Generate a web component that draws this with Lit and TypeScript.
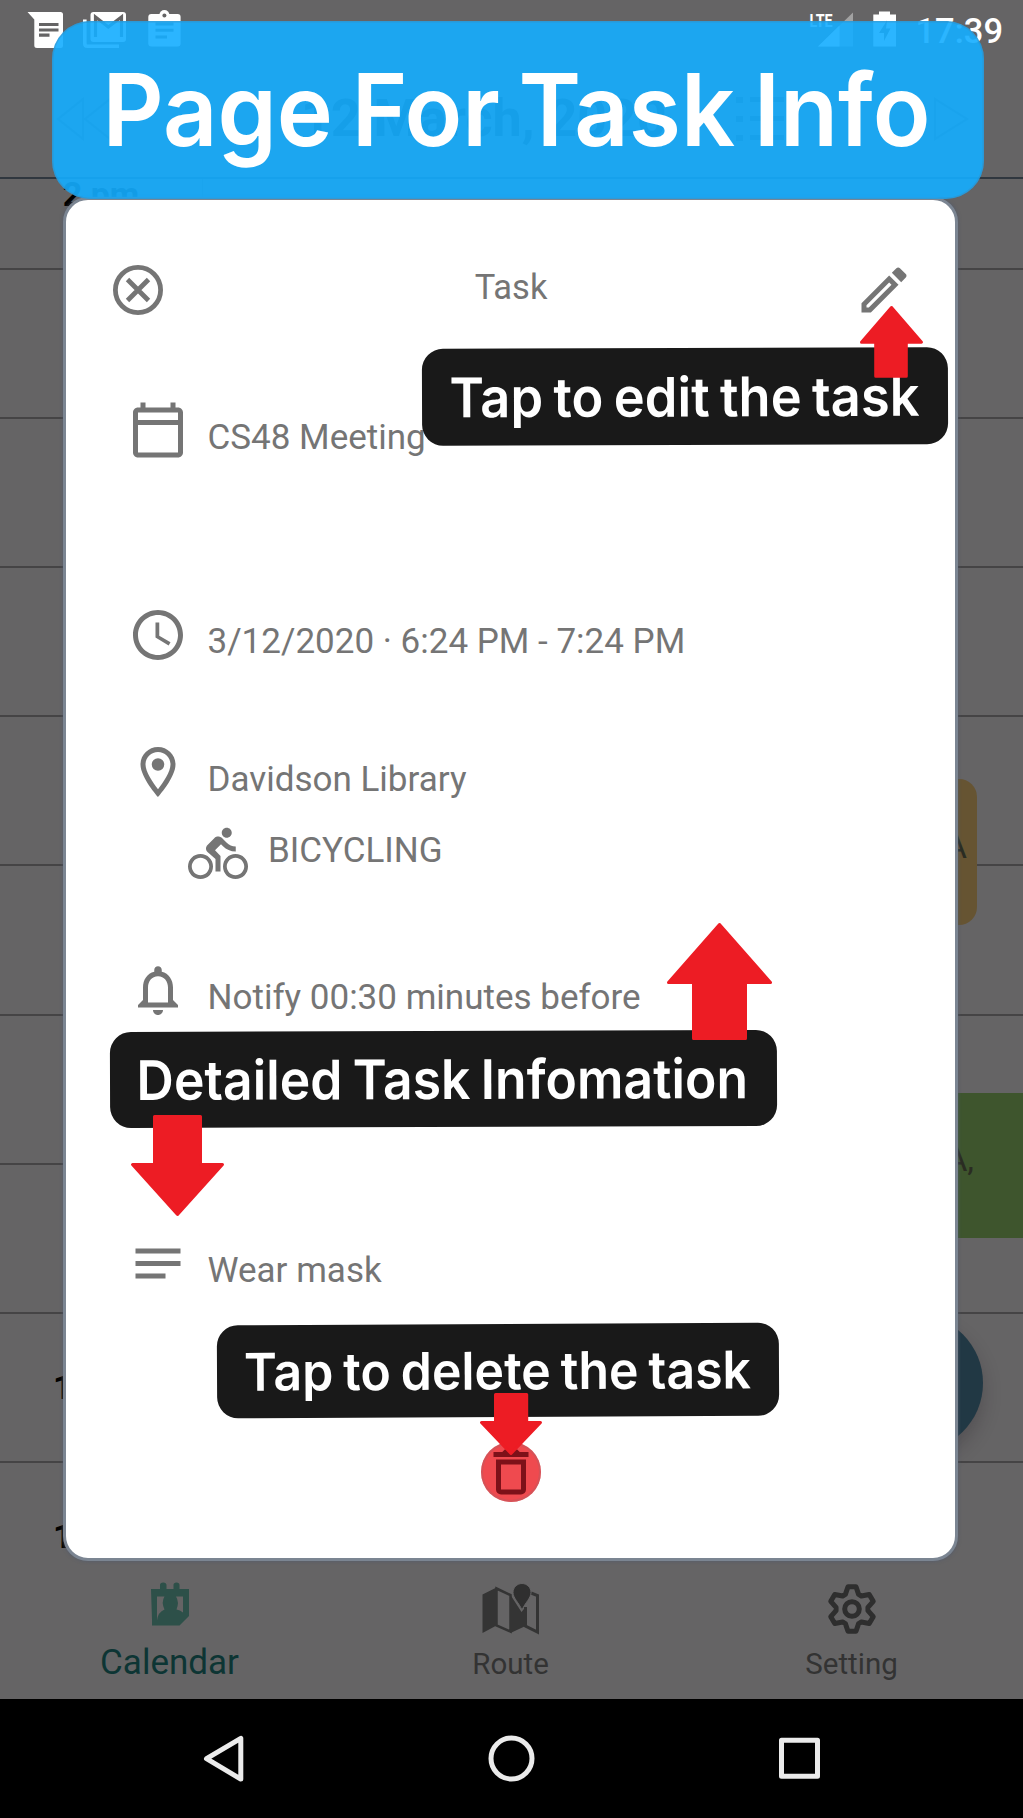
import { LitElement, html, svg, css } from "lit";
import { customElement, property } from "lit/decorators.js";

const ICONS: Record<string, string> = {
  edit: "M14.06,9L15,9.94L5.92,19H5V18.08L14.06,9M17.66,3C17.41,3 17.15,3.1 16.96,3.29L15.13,5.12L18.88,8.87L20.71,7.04C21.1,6.65 21.1,6 20.71,5.63L18.37,3.29C18.17,3.09 17.92,3 17.66,3M14.06,6.19L3,17.25V21H6.75L17.81,9.94L14.06,6.19Z",
  calendar:
    "M20 3h-1V1h-2v2H7V1H5v2H4c-1.1 0-2 .9-2 2v16c0 1.1.9 2 2 2h16c1.1 0 2-.9 2-2V5c0-1.1-.9-2-2-2zm0 2v3H4V5h16zM4 21V10h16v11H4z",
  clock:
    "M11.99 2C6.47 2 2 6.48 2 12s4.47 10 9.99 10C17.52 22 22 17.52 22 12S17.52 2 11.99 2zM12 20c-4.42 0-8-3.58-8-8s3.58-8 8-8 8 3.58 8 8-3.58 8-8 8zm.5-13H11v6l5.25 3.15.75-1.23-4.5-2.67z",
  place:
    "M12 2C8.13 2 5 5.13 5 9c0 5.25 7 13 7 13s7-7.75 7-13c0-3.87-3.13-7-7-7zM7 9c0-2.76 2.24-5 5-5s5 2.24 5 5c0 2.88-2.88 7.19-5 9.88C9.92 16.21 7 11.85 7 9zM12 6.5a2.5 2.5 0 1 0 0 5a2.5 2.5 0 1 0 0-5z",
  bike: "M15.5 5.5c1.1 0 2-.9 2-2s-.9-2-2-2-2 .9-2 2 .9 2 2 2zM5 12c-2.8 0-5 2.2-5 5s2.2 5 5 5 5-2.2 5-5-2.2-5-5-5zm0 8.5c-1.9 0-3.5-1.6-3.5-3.5s1.6-3.5 3.5-3.5 3.5 1.6 3.5 3.5-1.6 3.5-3.5 3.5zm5.8-10l2.4-2.4.8.8c1.3 1.3 3 2.1 5.1 2.1V9c-1.5 0-2.7-.6-3.6-1.5l-1.9-1.9c-.5-.4-1-.6-1.6-.6s-1.1.2-1.4.6L7.8 8.4c-.4.4-.6.9-.6 1.4 0 .6.2 1.1.6 1.4L11 14v5h2v-6.2l-2.2-2.3zM19 12c-2.8 0-5 2.2-5 5s2.2 5 5 5 5-2.2 5-5-2.2-5-5-5zm0 8.5c-1.9 0-3.5-1.6-3.5-3.5s1.6-3.5 3.5-3.5 3.5 1.6 3.5 3.5-1.6 3.5-3.5 3.5z",
  bell: "M12 22c1.1 0 2-.9 2-2h-4c0 1.1.9 2 2 2zm6-6v-5c0-3.07-1.63-5.64-4.5-6.32V4c0-.83-.67-1.5-1.5-1.5s-1.5.67-1.5 1.5v.68C7.64 5.36 6 7.92 6 11v5l-2 2v1h16v-1l-2-2zm-2 1H8v-6c0-2.48 1.51-4.5 4-4.5s4 2.02 4 4.5v6z",
  notes: "M3 5h18v2H3zM3 10h18v2H3zM3 15h12v2H3z",
  trash:
    "M6,19A2,2 0 0,0 8,21H16A2,2 0 0,0 18,19V7H6V19M8,9H16V19H8V9M15.5,4L14.5,3H9.5L8.5,4H5V6H19V4H15.5Z",
};

const glyph = (name: string) =>
  html`<svg class="icon" viewBox="0 0 24 24"><path d=${ICONS[name]} fill="currentColor"></path></svg>`;

/** Outline of a six-toothed gear centred on the origin. */
const gearOutline = (): string => {
  const tooth = [
    [-6.6, -14.6],
    [-4, -22.2],
    [4, -22.2],
    [6.6, -14.6],
  ];
  const points: string[] = [];
  for (let k = 0; k < 6; k++) {
    const a = (k * Math.PI) / 3;
    for (const [x, y] of tooth) {
      points.push(
        `${(x * Math.cos(a) - y * Math.sin(a)).toFixed(2)},${(x * Math.sin(a) + y * Math.cos(a)).toFixed(2)}`,
      );
    }
  }
  return points.join(" ");
};

@customElement("status-bar")
class StatusBar extends LitElement {
  static styles = css`
    :host {
      display: flex;
      align-items: flex-start;
      height: 60px;
      padding: 0 20px 0 27px;
      box-sizing: border-box;
      color: #fff;
      font: 500 34.5px/40px Roboto, sans-serif;
    }
    svg {
      display: block;
      flex: none;
    }
    .mail {
      margin-left: 18px;
    }
    .clip {
      margin-left: 20px;
    }
    .signal {
      margin-left: auto;
    }
    .battery {
      margin-left: 19px;
    }
    .time {
      margin: 11px 0 0 18px;
    }
    .lte {
      font: 700 19px Roboto, sans-serif;
      fill: #fff;
    }
  `;
  render() {
    return html`
      <svg width="37" height="60" viewBox="27 0 37 60">
        <path d="M27.500 12H60.500Q63 12 63 14.500V45.500Q63 48 60.500 48H37Q34.300 48 34.300 45.500V19.500Z" fill="#fff"></path>
        <path d="M39 24.500H58.500M39 30H58.500M39 35.200H49.500" stroke="#656465" stroke-width="3.200"></path>
      </svg>
      <svg class="mail" width="45" height="60" viewBox="82 0 45 60">
        <path d="M84.800 19.500V43.500Q84.800 46.200 87.500 46.200H119" stroke="#fff" stroke-width="3.600" fill="none"></path>
        <rect x="90.500" y="12" width="35.500" height="30" rx="3" fill="#fff"></rect>
        <path d="M95.500 37V17L108.300 27L121.500 17V37" stroke="#656465" stroke-width="3.200" fill="none"></path>
      </svg>
      <svg class="clip" width="35" height="60" viewBox="147 0 35 60">
        <rect x="148.300" y="14" width="32.300" height="32.500" rx="3" fill="#fff"></rect>
        <circle cx="164.400" cy="15" r="5" fill="#fff"></circle>
        <circle cx="164.400" cy="15.500" r="2" fill="#656465"></circle>
        <path d="M155.500 24H173.500M155.500 30.200H173.500M155.500 37H167" stroke="#656465" stroke-width="3"></path>
      </svg>
      <svg class="signal" width="45" height="60" viewBox="809 0 45 60">
        <path d="M818 46.500L853 12.500V46.500Z" fill="#fff" fill-opacity=".4"></path>
        <path d="M818 46.500L839.500 25.600V46.500Z" fill="#fff"></path>
        <path d="M809 11H834V28H809Z" fill="#656465"></path>
        <text class="lte" x="809.500" y="26.500" textLength="23" lengthAdjust="spacingAndGlyphs">LTE</text>
      </svg>
      <svg class="battery" width="24" height="60" viewBox="873 0 24 60">
        <path d="M873.300 14.500H879V11.500H890V14.500H896V46.500H873.300Z" fill="#fff"></path>
        <path d="M887 20.500L879 33H884V41L890.500 28.500H886Z" fill="#656465"></path>
      </svg>
      <span class="time">17:39</span>
    `;
  }
}

@customElement("day-view")
class DayView extends LitElement {
  static styles = css`
    :host {
      display: flex;
      flex-direction: column;
      height: 1497px;
      overflow: hidden;
      position: relative;
      font-family: Roboto, sans-serif;
    }
    .head {
      display: flex;
      align-items: center;
      flex: none;
      height: 119px;
      box-sizing: border-box;
      border-bottom: 2px solid #30373f;
      padding: 0 50px 0 55px;
      color: #1e1e1e;
    }
    .date {
      font-size: 52px;
      font-weight: 700;
      white-space: nowrap;
      margin-left: 188px;
    }
    .list {
      margin-left: 69px;
    }
    .next {
      margin-left: auto;
    }
    .hours {
      flex: none;
      margin-top: -58px;
      clip-path: inset(58px 0 0 0);
    }
    .hour {
      display: grid;
      grid-template-columns: 203px 1fr;
      height: 149.1px;
      box-sizing: border-box;
      border-bottom: 2px solid #454445;
    }
    .label {
      border-right: 1px solid #565556;
      font-size: 34px;
      font-weight: 700;
      line-height: 40px;
      padding-top: 53px;
      text-align: center;
      color: #000;
    }
    .event {
      position: absolute;
      box-sizing: border-box;
      font-size: 34px;
      line-height: 40px;
      color: #2a2c22;
      text-align: right;
    }
    .orange {
      left: 220px;
      width: 757px;
      top: 718.500px;
      height: 146px;
      border-radius: 18px;
      background: #665432;
      padding: 47px 10px 0;
    }
    .green {
      left: 220px;
      width: 803px;
      top: 1033px;
      height: 144.500px;
      background: #3e552d;
      padding: 46px 49px 0;
    }
    .fab {
      position: absolute;
      left: 845px;
      top: 1254px;
      width: 138px;
      height: 138px;
      border-radius: 50%;
      background: #213844;
      box-shadow: 0 10px 18px rgba(30, 25, 30, 0.25);
    }
  `;
  private hours = ["2 pm", "3 pm", "4 pm", "5 pm", "6 pm", "7 pm", "8 pm", "9 pm", "10 pm", "11 pm"];
  render() {
    return html`
      <div class="head">
        <svg width="58" height="48" viewBox="0 0 58 48" fill="none" stroke="#484848" stroke-width="2">
          <path d="M28 4L3 24L28 44ZM55 4L30 24L55 44Z"></path>
        </svg>
        <span class="date">12 March, 2020</span>
        <svg class="list" width="54" height="48" viewBox="0 0 54 48" fill="#333">
          <path d="M0 2h7v6H0zM0 21h7v6H0zM0 40h7v6H0zM14 2h34v5H14zM14 21h34v5H14zM14 40h34v5H14z"></path>
        </svg>
        <svg class="next" width="40" height="48" viewBox="0 0 40 48" fill="none" stroke="#484848" stroke-width="2">
          <path d="M2 4L34 24L2 44Z"></path>
        </svg>
      </div>
      <div class="hours">
        ${this.hours.map((h) => html`<div class="hour"><span class="label">${h}</span></div>`)}
      </div>
      <div class="event orange">CA</div>
      <div class="event green">CA,</div>
      <div class="fab"></div>
    `;
  }
}

@customElement("tab-bar")
class TabBar extends LitElement {
  static styles = css`
    :host {
      display: grid;
      grid-template-columns: repeat(3, 1fr);
      height: 142px;
      margin-left: -1px;
      padding-right: 1px;
      color: #333;
      font: 29.500px/40px Roboto, sans-serif;
      background: #656465;
    }
    .tab {
      display: flex;
      flex-direction: column;
      align-items: center;
      padding-top: 22px;
    }
    .tab svg {
      width: 60px;
      height: 60px;
    }
    .label {
      margin-top: 5px;
    }
    .active {
      color: #0d3534;
      font-size: 35px;
    }
    .active .label {
      margin-top: 4px;
    }
  `;
  render() {
    return html`
      <div class="tab active">
        <svg viewBox="0 0 60 60">
          <path
            fill="#2d5049"
            fill-rule="evenodd"
            d="M11 10H20V6Q20 3.500 23.200 3.500T26.500 6V10H33.500V6Q33.500 3.500 36.500 3.500T39.500 6V10H49V37L39.500 46.500H12V41ZM17 17.500H24.500Q21 23 24.500 30.500Q18 33 17 41.500ZM36 17.500H43V33.500Q40 31 36.500 30.500Q39.500 23 36 17.500Z"
          ></path>
        </svg>
        <span class="label">Calendar</span>
      </div>
      <div class="tab">
        <svg viewBox="0 0 60 60">
          <path d="M1.500 15.500L15.500 8.500V46.500L1.500 54Z" fill="#343434"></path>
          <path d="M15.500 9.500L29.500 16V52.500L15.500 46.500Z" fill="none" stroke="#343434" stroke-width="2.500"></path>
          <path d="M29.500 16L40.500 33L44.500 28V47L29.500 54Z" fill="#343434"></path>
          <path d="M50 14L56.500 16.500V53L44.500 47V28" fill="none" stroke="#343434" stroke-width="3"></path>
          <path
            d="M41 4.500C46 4.500 50 8.500 50 13.500C50 19 44 24 41 31C38 24 32 19 32 13.500C32 8.500 36 4.500 41 4.500Z"
            fill="#2f2f2f"
            stroke="#656465"
            stroke-width="1"
          ></path>
        </svg>
        <span class="label">Route</span>
      </div>
      <div class="tab">
        <svg viewBox="-30 -30 60 60" fill="none" stroke="#2e2e2e">
          ${svg`<polygon points=${gearOutline()} stroke-width="5" stroke-linejoin="round"></polygon>`}
          <circle r="7.300" stroke-width="5"></circle>
        </svg>
        <span class="label">Setting</span>
      </div>
    `;
  }
}

@customElement("nav-bar")
class NavBar extends LitElement {
  static styles = css`
    :host {
      display: flex;
      align-items: center;
      justify-content: space-between;
      height: 119px;
      padding: 0 194px;
      background: #000;
    }
    svg {
      width: 60px;
      height: 60px;
      fill: none;
      stroke: #ebebeb;
      stroke-width: 5;
      stroke-linejoin: round;
    }
  `;
  render() {
    return html`
      <svg viewBox="0 0 60 60"><path d="M46.800 9.300V50.100L12.500 29.700Z"></path></svg>
      <svg viewBox="0 0 60 60"><circle cx="29.500" cy="29.500" r="20.500"></circle></svg>
      <svg viewBox="0 0 60 60"><rect x="12.500" y="11.300" width="36" height="36"></rect></svg>
    `;
  }
}

@customElement("task-dialog")
class TaskDialog extends LitElement {
  static styles = css`
    :host {
      display: flex;
      flex-direction: column;
      box-sizing: border-box;
      border: 3px solid #7b8592;
      border-radius: 25px;
      background: #fff;
      padding: 60px 41px 0 42px;
      color: #757575;
      font: 35px/60px Roboto, sans-serif;
      box-shadow: 0 0 3px 1px rgba(80, 90, 110, 0.5);
    }
    .icon {
      width: 60px;
      height: 60px;
      flex: none;
      display: block;
    }
    .top {
      display: flex;
      justify-content: space-between;
      height: 60px;
    }
    .heading {
      margin-top: -3px;
      font-size: 34.500px;
    }
    .row {
      display: flex;
      gap: 20px;
      height: 60px;
      padding-left: 19.500px;
      white-space: nowrap;
    }
    .row span {
      margin-top: 8px;
    }
    .title {
      margin-top: 80px;
    }
    .when {
      margin-top: 145px;
    }
    .when span {
      margin-top: 7px;
    }
    .where {
      margin-top: 77px;
    }
    .mode {
      margin-top: 21.500px;
      padding-left: 80px;
    }
    .mode span {
      margin-top: -2.500px;
    }
    .notify {
      margin-top: 76.500px;
    }
    .note {
      margin-top: 216px;
    }
    .note span {
      margin-top: 5px;
    }
    .delete {
      align-self: center;
      margin-top: 146px;
      width: 60px;
      height: 60px;
      border-radius: 50%;
      background: #ef4a4f;
      box-shadow: inset 0 0 0 2px rgba(190, 90, 95, 0.5);
      color: #7d1119;
    }
  `;
  render() {
    return html`
      <div class="top">
        <svg class="icon" viewBox="0 0 60 60" fill="none" stroke="currentColor">
          <circle cx="30" cy="30" r="22.600" stroke-width="4.800"></circle>
          <path d="M19.500 19.500L40.500 40.500M40.500 19.500L19.500 40.500" stroke-width="4.800"></path>
        </svg>
        <span class="heading">Task</span>
        ${glyph("edit")}
      </div>
      <div class="row title">${glyph("calendar")}<span>CS48 Meeting</span></div>
      <div class="row when">${glyph("clock")}<span>3/12/2020 · 6:24 PM - 7:24 PM</span></div>
      <div class="row where">${glyph("place")}<span>Davidson Library</span></div>
      <div class="row mode">${glyph("bike")}<span>BICYCLING</span></div>
      <div class="row notify">${glyph("bell")}<span>Notify 00:30 minutes before</span></div>
      <div class="row note">${glyph("notes")}<span>Wear mask</span></div>
      <div class="delete">${glyph("trash")}</div>
    `;
  }
}

/** Rounded label whose text is fitted to a given width. */
@customElement("call-out")
class CallOut extends LitElement {
  @property() text = "";
  @property({ type: Number }) w = 0;
  @property({ type: Number }) h = 0;
  @property({ type: Number }) tx = 0;
  @property({ type: Number }) ty = 0;
  @property({ type: Number }) tw = 0;
  @property({ type: Number }) size = 54;
  static styles = css`
    :host {
      display: block;
    }
    svg {
      display: block;
      overflow: visible;
    }
    text {
      font-family: Inter, "Liberation Sans", sans-serif;
      font-weight: 600;
      word-spacing: -0.055em;
      fill: #fff;
    }
  `;
  render() {
    return html`
      <svg width=${this.w} height=${this.h}>
        <text
          x=${this.tx}
          y=${this.ty}
          font-size=${this.size}
          textLength=${this.tw}
          lengthAdjust="spacingAndGlyphs"
        >${this.text}</text>
      </svg>
    `;
  }
}

@customElement("app-root")
class AppRoot extends LitElement {
  static styles = css`
    :host {
      display: block;
      position: relative;
      width: 1023px;
      height: 1818px;
      overflow: hidden;
      background: #656465;
    }
    .dialog {
      position: absolute;
      left: 63px;
      top: 197px;
      width: 895px;
      height: 1364px;
    }
    .banner,
    .tip {
      position: absolute;
    }
    .banner {
      left: 52px;
      top: 21px;
      width: 932px;
      height: 177.500px;
      border-radius: 38px;
      background: rgba(20, 173, 255, 0.9);
      box-shadow: inset 0 0 0 1.500px rgba(70, 130, 170, 0.35);
    }
    .tip {
      border-radius: 21px;
      background: #191919;
    }
    .edit {
      left: 422px;
      top: 347.700px;
      width: 525.500px;
      height: 96.500px;
      transform: rotate(-0.18deg);
    }
    .info {
      left: 109.500px;
      top: 1031.300px;
      width: 667px;
      height: 96.300px;
      transform: rotate(-0.18deg);
    }
    .remove {
      left: 217px;
      top: 1324.300px;
      width: 561.500px;
      height: 92.500px;
      transform: rotate(-0.27deg);
    }
    .arrows {
      position: absolute;
      left: 0;
      top: 0;
      fill: #ed1c24;
      stroke: #ed1c24;
      stroke-width: 3;
      stroke-linejoin: round;
      pointer-events: none;
    }
  `;
  render() {
    return html`
      <status-bar></status-bar>
      <day-view></day-view>
      <tab-bar></tab-bar>
      <nav-bar></nav-bar>
      <task-dialog class="dialog"></task-dialog>
      <call-out class="banner" text="Page For Task Info" w="932" h="178" tx="50.500" ty="124.700" tw="828" size="100"></call-out>
      <call-out class="tip edit" text="Tap to edit the task" w="526" h="97" tx="27.500" ty="68.500" tw="470" size="54.500"></call-out>
      <call-out class="tip info" text="Detailed Task Infomation" w="667" h="97" tx="26.500" ty="68" tw="611.500" size="54.500"></call-out>
      <call-out class="tip remove" text="Tap to delete the task" w="562" h="93" tx="27" ty="65.500" tw="507" size="52"></call-out>
      <svg class="arrows" width="1023" height="1818" viewBox="0 0 1023 1818">
        <path d="M891.500 307.500L921.500 342.200H906.300V376.300H875.700V342.200H861.500Z"></path>
        <path d="M719.500 924.500L770.500 982.500H745.500V1038.500H693.500V982.500H668.500Z"></path>
        <path d="M154.500 1116.500H200.500V1164.500H222.500L177.500 1214.500L132.500 1164.500H154.500Z"></path>
        <path d="M495.500 1394.500H526.700V1422.500H540.500L511 1453.500L481.500 1422.500H495.500Z"></path>
      </svg>
    `;
  }
}
